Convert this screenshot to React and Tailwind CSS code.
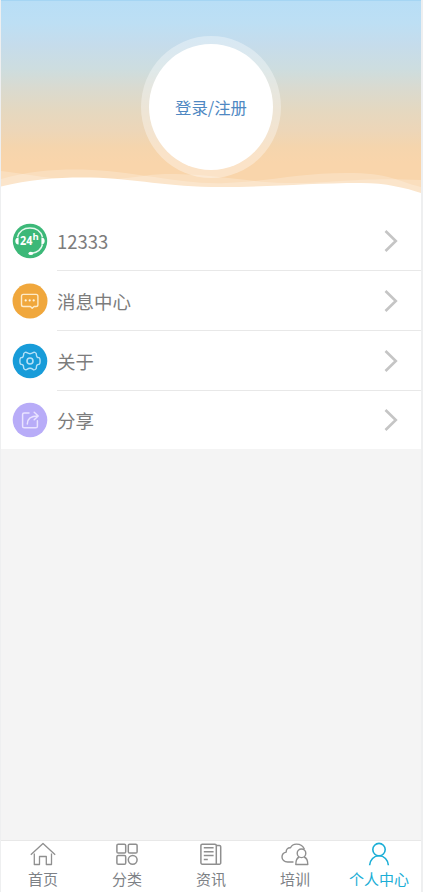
const HotlineIcon = () => (
  <svg viewBox="0 0 36 36" className="size-9" fill="none">
    <circle cx="18" cy="18" r="17.2" fill="#3cb878" />
    <path d="M5.5 14C7.3 8.3 12 5 18 5s10.700 3.300 12.500 9" stroke="#e6f8ee" strokeWidth="1.5" />
    <path d="M30.5 21.5c-1.3 4.800-5 8-10.500 8.800" stroke="#e6f8ee" strokeWidth="1.5" />
    <ellipse cx="18.8" cy="30.4" rx="2.4" ry="1.6" fill="#fff" />
    <path d="M6.600 14.600v7C4.300 21.400 3.300 20 3.300 18.100s1-3.300 3.300-3.500zM29.400 14.600v7c2.300-.2 3.300-1.600 3.300-3.500s-1-3.300-3.300-3.500z" fill="#fff" />
    <text x="8" y="22.3" fontSize="12" fontWeight="700" fontFamily="Open Sans, sans-serif" fill="#fff" textLength="12.4" lengthAdjust="spacingAndGlyphs">24</text>
    <text x="20.6" y="17.3" fontSize="9.5" fontWeight="700" fontFamily="Open Sans, sans-serif" fill="#fff">h</text>
  </svg>
);

const MessageIcon = () => (
  <svg viewBox="0 0 36 36" className="size-9" fill="none">
    <circle cx="18" cy="18" r="17.5" fill="#f0a73c" />
    <path d="M11.3 11.4h12.800a1.800 1.800 0 0 1 1.800 1.800v8.500a1.800 1.800 0 0 1-1.800 1.800h-2l-1.900 1.800-1.800-1.800h-7.100a1.800 1.800 0 0 1-1.800-1.800v-8.500a1.800 1.800 0 0 1 1.800-1.800z" stroke="#fdebc9" strokeWidth="1.4" strokeLinejoin="round" />
    <g fill="#fff3dc">
      <circle cx="13.7" cy="17.4" r="1.1" />
      <circle cx="17.7" cy="17.4" r="1.1" />
      <circle cx="21.7" cy="17.4" r="1.1" />
    </g>
  </svg>
);

const AboutIcon = () => (
  <svg viewBox="0 0 36 36" className="size-9" fill="none" stroke="#b5e1f7" strokeWidth="1.4" strokeLinejoin="round">
    <circle cx="18" cy="18" r="17.3" fill="#189cd9" stroke="none" />
    <path d="M12.800 9.500q1.200-.7 2.200.2 3 2 6 0 1-.9 2.200-.2 1.500.8 1.200 2.300.1 3 2.500 2.800 1.200.2 1.200 3.400t-1.200 3.400q-2.400-.2-2.500 2.800.3 1.500-1.200 2.300t-2.200-.2q-3-2-6 0-1 .9-2.200.2-1.500-.8-1.200-2.300-.1-3-2.500-2.800-1.200-.2-1.200-3.400t1.200-3.400q2.400.2 2.500-2.800-.3-1.500 1.200-2.300z" />
    <circle cx="18" cy="18" r="3" strokeWidth="1.6" />
  </svg>
);

const ShareIcon = () => (
  <svg viewBox="0 0 36 36" className="size-9" fill="none" stroke="#e9e3ff" strokeWidth="1.5" strokeLinecap="round" strokeLinejoin="round">
    <circle cx="18" cy="18" r="17.3" fill="#b8acf8" stroke="none" />
    <path d="M17 11h-4.800a1.600 1.600 0 0 0-1.600 1.600v11.600a1.600 1.600 0 0 0 1.600 1.600h11.600a1.600 1.600 0 0 0 1.600-1.600v-5.500" />
    <path d="M15.3 22c0-5 3-8 10.500-8M22.2 10.2 26.2 14l-4 3.800" />
  </svg>
);

const HomeIcon = () => (
  <svg viewBox="0 0 28 26" className="h-[26px] w-7" fill="none" stroke="currentColor" strokeWidth="1.3" strokeLinejoin="round">
    <path d="M1.800 13.800 14 2.500l12.200 11.300" />
    <path d="M5.300 12.500v11h5.200v-8h6.800v8h5.200v-11" />
  </svg>
);

const CategoryIcon = () => (
  <svg viewBox="0 0 28 26" className="h-[26px] w-7" fill="none" stroke="currentColor" strokeWidth="1.5">
    <rect x="3.9" y="3.2" width="8.8" height="8.8" rx="1.3" />
    <rect x="15.3" y="3.2" width="8.8" height="8.8" rx="1.3" />
    <rect x="3.9" y="14.4" width="8.8" height="8.8" rx="1.3" />
    <circle cx="19.7" cy="18.8" r="4.4" />
  </svg>
);

const NewsIcon = () => (
  <svg viewBox="0 0 28 26" className="h-[26px] w-7" fill="none" stroke="currentColor" strokeWidth="1.5" strokeLinejoin="round">
    <path d="M19.300 23.200H5.300a1.400 1.400 0 0 1-1.400-1.400V4.600a1.400 1.400 0 0 1 1.400-1.400h12.600a1.400 1.400 0 0 1 1.400 1.400v18.600z" />
    <path d="M19.300 4.400h3.100a1.300 1.300 0 0 1 1.300 1.300v16.200a1.300 1.300 0 0 1-1.300 1.300h-3.100" />
    <path d="M6.800 6.800h9.800M6.800 10.700h9.800M6.800 14.600h9.800M6.800 18.500h4" />
  </svg>
);

const TrainingIcon = () => (
  <svg viewBox="0 0 28 26" className="h-[26px] w-7" fill="none" stroke="currentColor" strokeWidth="1.4" strokeLinejoin="round">
    <path d="M12.500 21H6.700C3.200 21 1 18.900 1 16c0-2.600 1.600-4.400 4.200-4.900-.1-2.700 1.400-4.500 4.300-4.300C10.600 4.500 12.600 3.100 15.400 3.100c4 0 6.900 2 8 5.200" />
    <circle cx="20.5" cy="12.3" r="4.3" />
    <path d="M18.300 16c-2.300.9-3.500 3.200-3.500 7.500h12c0-4.300-1.300-6.600-3.700-7.500" />
  </svg>
);

const ProfileIcon = () => (
  <svg viewBox="0 0 28 26" className="h-[26px] w-7" fill="none" stroke="currentColor" strokeWidth="1.6">
    <circle cx="14" cy="8.6" r="6.2" />
    <path d="M4.600 24.300c.4-5.500 4.300-9.500 9.400-9.500s9 4 9.400 9.500" />
  </svg>
);

const menu = [
  { label: "12333", icon: HotlineIcon },
  { label: "消息中心", icon: MessageIcon },
  { label: "关于", icon: AboutIcon },
  { label: "分享", icon: ShareIcon },
];

const tabs = [
  { label: "首页", icon: HomeIcon },
  { label: "分类", icon: CategoryIcon },
  { label: "资讯", icon: NewsIcon },
  { label: "培训", icon: TrainingIcon },
  { label: "个人中心", icon: ProfileIcon, active: true },
];

function Header() {
  return (
    <header className="relative h-[211px] shrink-0 border-t border-[#a5d5f3] bg-[linear-gradient(to_bottom,#b8def6_0px,#bddff4_22px,#c5dcec_43px,#cddddf_68px,#dadacf_88px,#e5d8c0_110px,#edd6b8_130px,#f5d5ad_146px,#f9d5ab_162px,#f9d5ab_180px)]">
      <svg viewBox="0 0 420 210" className="absolute inset-0 size-full" preserveAspectRatio="none">
        <path d="M0 170C35 174 55 180 95 179S145 172 175 173C220 174 245 181 285 182S355 176 420 179V210H0Z" fill="#fff" fillOpacity=".22" />
        <path d="M0 178C28 170 55 168 82 168.500C135 170 180 184 225 182S300 172 345 172S395 180 420 186V210H0Z" fill="#fff" fillOpacity=".22" />
        <path d="M0 185.500C30 178 60 176 90 176.500C135 177.500 165 186 220 186C270 186 310 182 360 182C385 182 405 187 420 192V210H0Z" fill="#fff" />
      </svg>
      <div className="relative mx-auto mt-[35px] flex h-[142px] w-[140px] items-center justify-center rounded-[50%] bg-white/35">
        <button className="h-[126px] w-[124px] rounded-[50%] bg-white text-[16.4px] text-[#4f88c2]">登录/注册</button>
      </div>
    </header>
  );
}

function MenuRow({ item }) {
  const Icon = item.icon;
  return (
    <li className="group flex h-[60px] items-center pl-[11px] last:h-[58px]">
      <Icon />
      <div className="ml-[9px] flex h-full flex-1 items-center justify-between border-b border-[#e8e8e8] pr-[22px] group-last:border-0">
        <span className="pt-[2px] text-[18.5px] text-[#7c7c7c]">{item.label}</span>
        <svg viewBox="0 0 16 24" className="h-6 w-4" fill="none" stroke="#c5c5c5" strokeWidth="2.6">
          <path d="M2.500 2 12.800 12 2.500 22" />
        </svg>
      </div>
    </li>
  );
}

export default function App() {
  return (
    <div className="flex h-[892px] w-[423px] flex-col border-r-2 border-l border-[#eeeff0] bg-[#f4f4f4] font-['Noto_Sans_CJK_SC',sans-serif]">
      <Header />
      <ul className="bg-white">
        {menu.map((item) => (
          <MenuRow key={item.label} item={item} />
        ))}
      </ul>
      <nav className="mt-auto grid h-[52px] grid-cols-5 border-t border-[#e8e8e8] bg-white">
        {tabs.map(({ label, icon: Icon, active }) => (
          <a key={label} className={active ? "flex flex-col items-center text-[#1baed6]" : "flex flex-col items-center text-[#8f8f8f]"}>
            <Icon />
            <span className={active ? "text-[15px] leading-6" : "text-[15px] leading-6 text-[#7d8186]"}>{label}</span>
          </a>
        ))}
      </nav>
    </div>
  );
}
